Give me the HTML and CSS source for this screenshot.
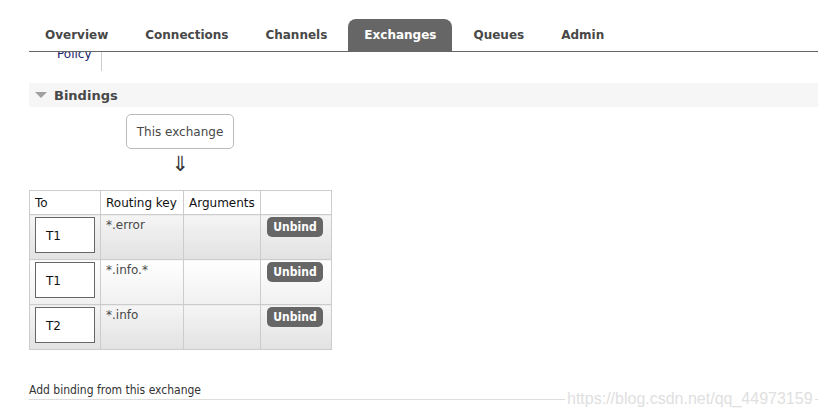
FILE: index.html
```html
<!DOCTYPE html>
<html>
<head>
<meta charset="utf-8">
<link rel="stylesheet" href="styles.css">
</head>
<body>
<div class="page">
  <div class="header">
    <ul class="tabs">
      <li class="tab">Overview</li>
      <li class="tab">Connections</li>
      <li class="tab">Channels</li>
      <li class="tab active">Exchanges</li>
      <li class="tab">Queues</li>
      <li class="tab">Admin</li>
    </ul>
  </div>
  <div class="clipped">
    <div class="policy-cell"><span class="policy">Policy</span></div>
  </div>
  <div class="section-head"><span class="tri"></span><span class="section-title">Bindings</span></div>
  <div class="diagram">
    <div class="this-ex">This exchange</div>
    <div class="arrow">⇓</div>
  </div>
  <table class="bindings">
    <thead>
      <tr><th class="c-to">To</th><th class="c-rk">Routing key</th><th class="c-args">Arguments</th><th class="c-act"></th></tr>
    </thead>
    <tbody>
      <tr class="alt1"><td><div class="qbox">T1</div></td><td>*.error</td><td></td><td><span class="btn">Unbind</span></td></tr>
      <tr class="alt0"><td><div class="qbox">T1</div></td><td>*.info.*</td><td></td><td><span class="btn">Unbind</span></td></tr>
      <tr class="alt1"><td><div class="qbox">T2</div></td><td>*.info</td><td></td><td><span class="btn">Unbind</span></td></tr>
    </tbody>
  </table>
  <div class="add-binding"><span class="add-title">Add binding from this exchange</span><span class="watermark">https://blog.csdn.net/qq_44973159</span></div>
</div>
</body>
</html>
```

FILE: styles.css
```css
html, body {
  margin: 0;
  padding: 0;
  background: #fff;
}
body {
  font-family: "DejaVu Sans", Verdana, sans-serif;
  font-size: 12px;
  color: #484848;
  width: 818px;
  height: 418px;
  overflow: hidden;
}
.page {
  padding-left: 29px;
}
.header {
  padding-top: 19px;
  background: #fff;
}
.tabs {
  list-style: none;
  margin: 0;
  padding: 0;
  display: flex;
  gap: 5px;
  border-bottom: 1px solid #666;
  height: 32px;
}
.tab {
  padding: 0 16px;
  height: 32px;
  line-height: 33px;
  font-weight: bold;
  font-size: 12px;
  color: #484848;
  border-radius: 8px 8px 0 0;
}
.tab.active {
  background: #666;
  color: #fff;
}
.clipped {
  height: 19px;
  overflow: hidden;
  display: flex;
}
.policy-cell {
  width: 72px;
  border-right: 1px solid #ccc;
}
.policy {
  display: block;
  margin-top: -5px;
  padding-left: 28px;
  color: #1b1b6a;
  font-size: 12px;
}
.section-head {
  margin-top: 12px;
  height: 24px;
  background: #f6f6f6;
  display: flex;
  align-items: center;
}
.tri {
  width: 0;
  height: 0;
  margin-left: 6px;
  border-left: 6px solid transparent;
  border-right: 6px solid transparent;
  border-top: 6px solid #a0a0a0;
}
.section-title {
  margin-left: 7px;
  font-weight: bold;
  font-size: 13px;
  color: #484848;
}
.diagram {
  width: 302px;
  display: flex;
  flex-direction: column;
  align-items: center;
  padding-top: 7px;
}
.this-ex {
  width: 106px;
  height: 33px;
  border: 1px solid #bbb;
  border-radius: 5px;
  display: flex;
  align-items: center;
  justify-content: center;
  color: #484848;
  font-size: 12px;
}
.arrow {
  margin-top: 3px;
  height: 38px;
  font-size: 21px;
  line-height: 24px;
  color: #333;
}
.bindings {
  border-collapse: collapse;
  border: 1px solid #ccc;
}
.bindings th, .bindings td {
  border: 1px solid #ccc;
  padding: 0;
  text-align: left;
  vertical-align: top;
  font-weight: normal;
  color: #111;
}
.bindings th {
  height: 23px;
  vertical-align: middle;
  padding-left: 5px;
  background: #fff;
}
.c-to { width: 65px; }
.c-rk { width: 77px; }
.c-args { width: 71px; }
.c-act { width: 65px; }
.bindings td {
  height: 45px;
  padding: 2px 5px 0 5px;
  box-sizing: border-box;
  color: #484848;
}
.bindings td:nth-child(2) {
  padding-top: 3px;
}
.alt1 td {
  background: linear-gradient(#f5f5f5, #e2e2e2);
}
.alt0 td {
  background: linear-gradient(#ffffff, #f0f0f0);
}
.qbox {
  height: 34px;
  border: 1px solid #666;
  background: #fff;
  padding-left: 10px;
  width: 48px;
  line-height: 36px;
  color: #111;
}
.btn {
  display: inline-block;
  width: 56px;
  height: 20px;
  line-height: 20px;
  text-align: center;
  background: #666;
  color: #fff;
  font-family: "DejaVu Sans Condensed", "DejaVu Sans", sans-serif;
  font-weight: bold;
  font-size: 12px;
  border-radius: 5px;
  margin-left: 1px;
}
.add-binding {
  margin-top: 33px;
  border-bottom: 1px solid #ddd;
  height: 16px;
  position: relative;
}
.add-title {
  font-family: "DejaVu Sans Condensed", "DejaVu Sans", sans-serif;
  font-size: 12px;
  color: #333;
  line-height: 14px;
}
.watermark {
  position: absolute;
  left: 536px;
  top: 7px;
  font-family: "Liberation Sans", Arial, sans-serif;
  font-size: 16px;
  color: #e0e0e0;
  background: #fff;
  padding: 0 2px;
}
```
